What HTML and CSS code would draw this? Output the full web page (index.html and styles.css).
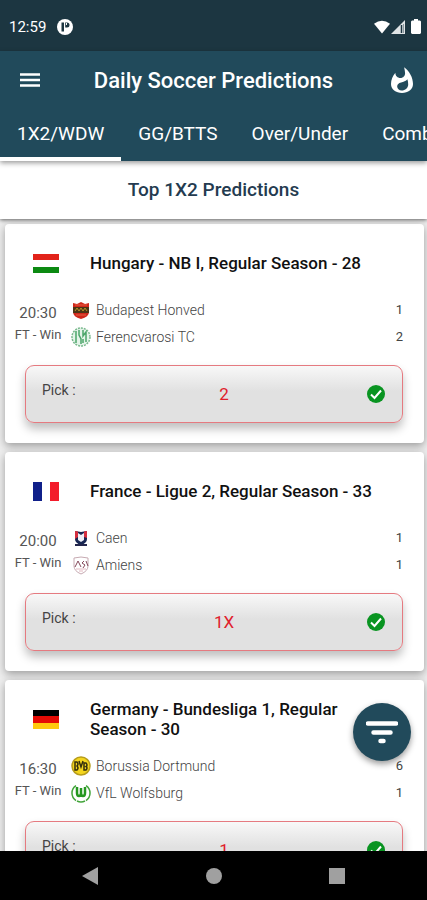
FILE: index.html
```html
<!doctype html>
<html lang="en">
	<head>
		<meta charset="utf-8">
		<meta name="viewport" content="width=device-width, initial-scale=1">
		<title>Daily Soccer Predictions</title>
		<link rel="stylesheet" href="styles.css">
	</head>
	<body>

		<div class="status-bar">
			<span>12:59</span>
			<svg class="status-app" width="16" height="16" viewBox="0 0 16 16">
				<circle cx="8" cy="8" r="8" fill="#fff"/>
				<path d="M4.500 3.500h2.500v9H4.500zM8.200 3.500h1.800a2.500 2.500 0 0 1 0 5H8.200z" fill="#1c3641"/>
				<path d="M9.500 4v2" stroke="#fff" stroke-width="1"/>
			</svg>
			<div class="status-icons">
				<svg width="16" height="14" viewBox="0 0 17 14"><path d="M0 3.500Q8.500-3 17 3.500L8.500 14z" fill="#fff"/></svg>
				<svg width="14" height="14" viewBox="0 0 14 14"><path d="M14 0v14H0z" fill="#dfe4e6"/><path d="M10.500 5v8" stroke="#1c3641" stroke-width="1.500"/><path d="M12.500 4v9" stroke="#8b999f" stroke-width="1"/></svg>
				<svg class="battery" width="10" height="15" viewBox="0 0 10 15"><path d="M3 0h4v1.500h2l1 1V14l-1 1H1l-1-1V2.500l1-1h2z" fill="#fff"/></svg>
			</div>
		</div>

		<header class="app-header">
			<div class="toolbar">
				<button class="icon-btn" aria-label="Menu">
					<svg width="20" height="14" viewBox="0 0 20 14"><path d="M0 1.500h20M0 7h20M0 12.500h20" stroke="#fff" stroke-width="2.500"/></svg>
				</button>
				<h1>Daily Soccer Predictions</h1>
				<button class="icon-btn" aria-label="Hot picks">
					<svg width="22" height="26" viewBox="4 0.500 16 20.500" preserveAspectRatio="none"><path d="M13.500.67s.74 2.650.74 4.800c0 2.060-1.350 3.730-3.410 3.730-2.070 0-3.630-1.670-3.630-3.730l.03-.36C5.210 7.510 4 10.620 4 14c0 4.420 3.580 7 8 7s8-2.580 8-7C20 8.610 17.410 3.800 13.500.67zM11.710 19c-1.780 0-3.220-1.400-3.220-3.140 0-1.620 1.050-2.760 2.810-3.120 1.770-.36 3.600-1.210 4.620-2.580.39 1.290.59 2.650.59 4.040 0 2.650-2.150 4.800-4.800 4.800z" fill="#fff"/></svg>
				</button>
			</div>
			<nav class="tabs">
				<button class="tab active">1X2/WDW</button>
				<button class="tab">GG/BTTS</button>
				<button class="tab">Over/Under</button>
				<button class="tab">Combo</button>
			</nav>
		</header>

		<h2 class="section-title">Top 1X2 Predictions</h2>

		<main>
			<div class="match-list">

				<article class="card">
					<div class="league">
						<svg class="flag" width="26" height="19" viewBox="0 0 26 19"><path d="M0 0h26v19H0z" fill="#fff"/><path d="M0 0h26v6H0z" fill="#e2231a"/><path d="M0 13h26v6H0z" fill="#0c8a12"/></svg>
						<h3>Hungary - NB I, Regular Season - 28</h3>
					</div>
					<div class="match">
						<div class="kickoff">
							<span class="time">20:30</span>
							<span class="market">FT - Win</span>
						</div>
						<div class="teams">
							<div class="team">
								<svg width="20" height="20" viewBox="0 0 20 20"><path d="M2 3l4 1 4-2 4 2 4-1v9q0 5-8 7-8-2-8-7z" fill="#cf271b"/><path d="M2 7h16v6H2z" fill="#4b3515"/><path d="M4 11l2-3 2 3 2-3 2 3 2-3 2 3" stroke="#b99528" fill="none"/><path d="M4 5h12M5 15h10" stroke="#e66043"/></svg>
								<span class="name">Budapest Honved</span>
								<span class="score">1</span>
							</div>
							<div class="team">
								<svg width="20" height="20" viewBox="0 0 20 20"><circle cx="10" cy="10" r="9" fill="#e4f4e9" stroke="#79b98d" stroke-width="1.500" stroke-dasharray="2 1"/><path d="M5 4v12M8 3v5l2 4v5M12 3v6l3-4v10M12 12v4" stroke="#4ba569" stroke-width="1.500" fill="none"/></svg>
								<span class="name">Ferencvarosi TC</span>
								<span class="score">2</span>
							</div>
						</div>
					</div>
					<div class="pick">
						<span class="pick-label">Pick :</span>
						<span class="pick-value">2</span>
						<svg width="18" height="18" viewBox="0 0 18 18"><circle cx="9" cy="9" r="9" fill="#099421"/><path d="M4 9.500l3.500 3.500L14 5.500" stroke="#fff" stroke-width="2" fill="none"/></svg>
					</div>
				</article>

				<article class="card">
					<div class="league">
						<svg class="flag" width="26" height="19" viewBox="0 0 26 19"><path d="M0 0h26v19H0z" fill="#fff"/><path d="M0 0h9v19H0z" fill="#10208a"/><path d="M17 0h9v19h-9z" fill="#f31c2b"/></svg>
						<h3>France - Ligue 2, Regular Season - 33</h3>
					</div>
					<div class="match">
						<div class="kickoff">
							<span class="time">20:00</span>
							<span class="market">FT - Win</span>
						</div>
						<div class="teams">
							<div class="team">
								<svg width="20" height="20" viewBox="0 0 20 20"><path d="M4 3l6 1 6-1v8q0 4-6 6-6-2-6-6z" fill="#172653"/><path d="M4 3l3 .5V9l-3 2z" fill="#d62e3f"/><path d="M13 3.500l3-.5v7l-3-1z" fill="#d62e3f"/><path d="M7 5l3 2 3-2v7l-3 2-3-2z" fill="#eef0f7"/><path d="M4 17h12" stroke="#23264c" stroke-width="2"/></svg>
								<span class="name">Caen</span>
								<span class="score">1</span>
							</div>
							<div class="team">
								<svg width="20" height="20" viewBox="0 0 20 20"><path d="M3 3l7-1 7 1v8q0 5-7 8-7-3-7-8z" fill="#fff" stroke="#c7aab2"/><path d="M4 12l3-6 3 6M13 6l-2 2 3 2-2 3M15 6l2 5" stroke="#85495b" fill="none"/><path d="M5 14h10M8 16h4" stroke="#e3b9c1"/></svg>
								<span class="name">Amiens</span>
								<span class="score">1</span>
							</div>
						</div>
					</div>
					<div class="pick">
						<span class="pick-label">Pick :</span>
						<span class="pick-value">1X</span>
						<svg width="18" height="18" viewBox="0 0 18 18"><circle cx="9" cy="9" r="9" fill="#099421"/><path d="M4 9.500l3.500 3.500L14 5.500" stroke="#fff" stroke-width="2" fill="none"/></svg>
					</div>
				</article>

				<article class="card">
					<div class="league">
						<svg class="flag" width="26" height="19" viewBox="0 0 26 19"><path d="M0 0h26v7H0z" fill="#000"/><path d="M0 6h26v7H0z" fill="#e50b05"/><path d="M0 13h26v6H0z" fill="#ffc90e"/></svg>
						<h3>Germany - Bundesliga 1, Regular Season - 30</h3>
					</div>
					<div class="match">
						<div class="kickoff">
							<span class="time">16:30</span>
							<span class="market">FT - Win</span>
						</div>
						<div class="teams">
							<div class="team">
								<svg width="20" height="20" viewBox="0 0 20 20"><circle cx="10" cy="10" r="9" fill="#f4d51d" stroke="#b79d1b" stroke-width="1.500"/><path d="M4 6v8h2q2-2 0-4 2-2 0-4zM8 5l2 6 2-6M13 14V7h2q2 2 0 3.500 2 1 0 3.500z" fill="none" stroke="#332e0d" stroke-width="1.500"/></svg>
								<span class="name">Borussia Dortmund</span>
								<span class="score">6</span>
							</div>
							<div class="team">
								<svg width="20" height="20" viewBox="0 0 20 20"><path d="M5 2.500a9 9 0 0 0 0 15M15 2.500a9 9 0 0 1 0 15M6 18q4 2 8 0" stroke="#42a53a" stroke-width="1.500" fill="none"/><path d="M6 4v6q0 3 2 3t2-3V5v5q0 3 2 3t2-3V4" stroke="#259820" stroke-width="2.500" fill="none"/></svg>
								<span class="name">VfL Wolfsburg</span>
								<span class="score">1</span>
							</div>
						</div>
					</div>
					<div class="pick">
						<span class="pick-label">Pick :</span>
						<span class="pick-value">1</span>
						<svg width="18" height="18" viewBox="0 0 18 18"><circle cx="9" cy="9" r="9" fill="#099421"/><path d="M4 9.500l3.500 3.500L14 5.500" stroke="#fff" stroke-width="2" fill="none"/></svg>
					</div>
				</article>

			</div>

			<button class="filter-btn" aria-label="Filter">
				<svg width="32" height="23" viewBox="0 0 32 23"><path d="M2 2.500h28M7.500 11.500h17M14.500 20h3" stroke="#fff" stroke-width="4.500" stroke-linecap="round"/></svg>
			</button>
		</main>

		<footer class="system-nav">
			<button class="icon-btn" aria-label="Back"><svg width="16" height="18" viewBox="0 0 16 18"><path d="M16 0v18L0 9z" fill="#a0a0a0"/></svg></button>
			<button class="icon-btn" aria-label="Home"><svg width="16" height="16" viewBox="0 0 16 16"><circle cx="8" cy="8" r="8" fill="#a0a0a0"/></svg></button>
			<button class="icon-btn" aria-label="Recent apps"><svg width="16" height="16" viewBox="0 0 16 16"><path d="M0 0h16v16H0z" fill="#a0a0a0"/></svg></button>
		</footer>

	</body>
</html>
```
FILE: styles.css
```css
* {
	box-sizing: border-box;
}

body {
	margin: 0;
	height: 100vh;
	display: flex;
	flex-direction: column;
	overflow: hidden;
	font-family: Roboto, "Liberation Sans", sans-serif;
	background: #fff;
}

h1, h2, h3 {
	margin: 0;
	font-weight: 500;
}

button {
	padding: 0;
	border: 0;
	background: none;
	font-family: inherit;
	cursor: pointer;
}

svg {
	display: block;
	flex: none;
}

.icon-btn {
	width: 24px;
	height: 32px;
	display: flex;
	align-items: center;
	justify-content: center;
}

/* STATUS BAR */
.status-bar {
	flex: none;
	height: 51px;
	padding: 2px 6px 0 9px;
	display: flex;
	align-items: center;
	gap: 11px;
	background: #1c3641;
	color: #fff;
	font-size: 15px;
}

.status-icons {
	margin-left: auto;
	display: flex;
	align-items: center;
	gap: 1px;
}

.battery {
	margin-left: 5px;
}

/* HEADER */
.app-header {
	flex: none;
	position: relative;
	z-index: 2;
	background: #214a5b;
	color: #fff;
	box-shadow: 0 2px 5px rgba(0, 0, 0, 0.4);
}

.toolbar {
	height: 58px;
	padding: 0 13px 0 18px;
	display: flex;
	align-items: center;
}

.toolbar h1 {
	flex: 1;
	padding-right: 5px;
	font-size: 22px;
	text-align: center;
	white-space: nowrap;
}

.tabs {
	display: flex;
	overflow: hidden;
}

.tab {
	flex: none;
	height: 52px;
	padding: 0 17px;
	border-bottom: 4px solid transparent;
	color: #fff;
	font-size: 19px;
}

.tab.active {
	border-bottom-color: #fff;
}

.section-title {
	flex: none;
	position: relative;
	z-index: 1;
	background: #fff;
	color: #243b50;
	font-size: 19px;
	line-height: 58px;
	text-align: center;
	box-shadow: 0 1px 4px rgba(0, 0, 0, 0.6);
}

/* MATCHES */
main {
	flex: 1;
	min-height: 0;
	position: relative;
	background: #eee;
}

.match-list {
	height: 100%;
	padding: 5px 3px 0 5px;
	display: flex;
	flex-direction: column;
	gap: 9px;
	overflow: hidden;
}

.card {
	flex: none;
	padding: 19px 21px 20px 20px;
	background: #fff;
	border-radius: 4px;
	box-shadow: 0 3px 8px rgba(0, 0, 0, 0.35);
}

.league {
	height: 40px;
	display: flex;
	align-items: center;
	gap: 31px;
	padding: 0 16px 0 8px;
}

.league h3 {
	color: #111;
	font-size: 17px;
	line-height: 20px;
}

.match {
	display: flex;
	gap: 6px;
	margin: 13px 0 15px -14px;
}

.kickoff {
	width: 54px;
	padding-top: 7px;
	display: flex;
	flex-direction: column;
	align-items: center;
	color: #555;
	line-height: 21px;
}

.time {
	font-size: 15px;
}

.market {
	font-size: 13px;
}

.teams {
	flex: 1;
}

.team {
	height: 27px;
	display: flex;
	align-items: center;
	gap: 5px;
	color: #444;
	font-size: 14px;
	font-weight: 300;
}

.score {
	margin-left: auto;
	font-size: 13px;
	font-weight: 400;
}

.pick {
	height: 58px;
	padding: 0 17px 0 16px;
	display: flex;
	align-items: center;
	border: 1px solid #e57a80;
	border-radius: 9px;
	background: linear-gradient(#f8f8f8, #e1e1e1 45%, #e1e1e1);
	box-shadow: 0 6px 10px rgba(0, 0, 0, 0.25);
}

.pick-label {
	min-width: 39px;
	padding-bottom: 8px;
	color: #444;
	font-size: 14px;
}

.pick-value {
	flex: 1;
	color: #e0202c;
	font-size: 17px;
	text-align: center;
}

.filter-btn {
	position: absolute;
	right: 16px;
	bottom: 90px;
	width: 58px;
	height: 58px;
	display: flex;
	align-items: center;
	justify-content: center;
	border-radius: 50%;
	background: #214a5b;
	box-shadow: 0 3px 6px rgba(0, 0, 0, 0.4);
}

/* SYSTEM NAVIGATION */
.system-nav {
	flex: none;
	height: 49px;
	padding: 0 78px;
	display: flex;
	align-items: center;
	justify-content: space-between;
	background: #000;
}
```
